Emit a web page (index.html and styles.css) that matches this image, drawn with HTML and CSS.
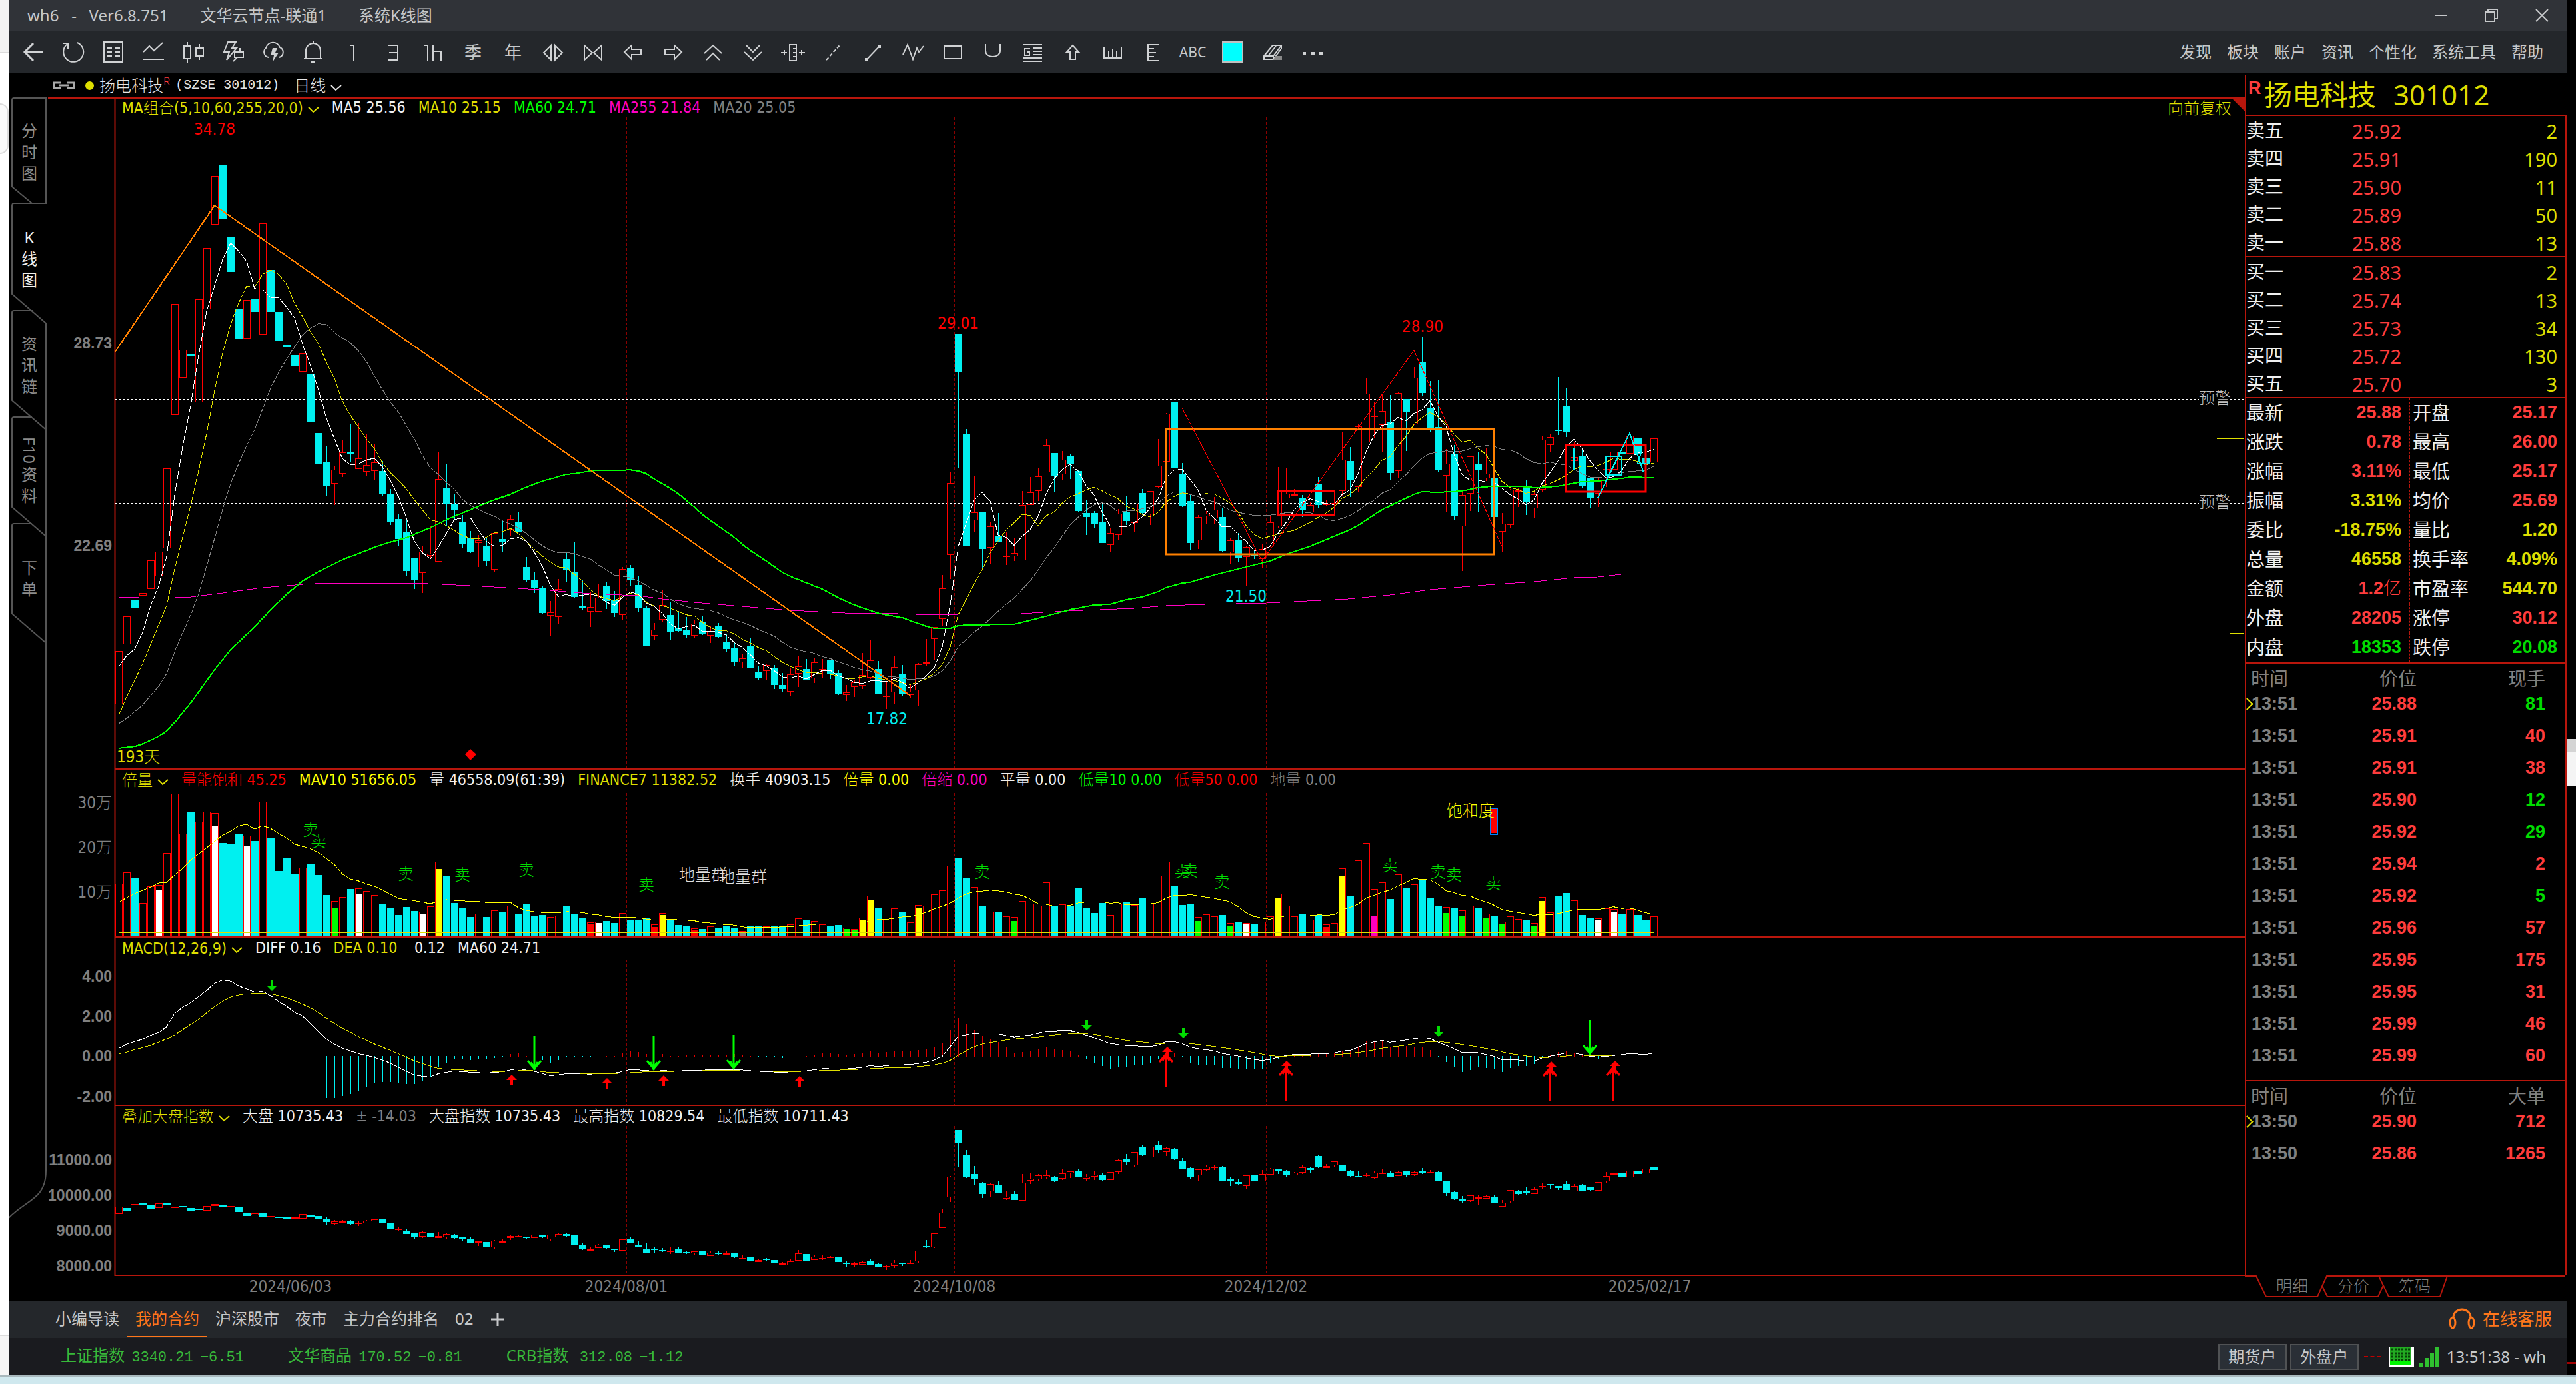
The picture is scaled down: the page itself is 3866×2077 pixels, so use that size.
FILE: index.html
```html
<!DOCTYPE html>
<html lang="zh-CN">
<head>
  <meta charset="UTF-8">
  <title>wh6 - 扬电科技 301012</title>
  <link rel="stylesheet" href="styles.css">
</head>
<body>
  <div class="edge edge-left"><i class="edge-line"></i><i class="edge-box"></i><i class="edge-foot"></i></div>
  <div class="window">
    <header class="titlebar">
      <span>wh6&nbsp;&nbsp; -&nbsp;&nbsp; Ver6.8.751</span>
      <span>文华云节点-联通1</span>
      <span>系统K线图</span>
      <div class="win-controls">
        <button aria-label="最小化"><svg viewBox="0 0 24 24"><path d="M3 12H21"/></svg></button>
        <button aria-label="还原"><svg viewBox="0 0 24 24"><path d="M3 7H17V21H3ZM7 7V3H21V17H17"/></svg></button>
        <button aria-label="关闭"><svg viewBox="0 0 24 24"><path d="M3 3L21 21M21 3L3 21"/></svg></button>
      </div>
    </header>

    <div class="toolbar">
      <div class="tools">
        <button aria-label="返回"><svg viewBox="0 0 36 36"><path class="thick" d="M5 18H32M18 5L5 18L18 31"/></svg></button>
        <button aria-label="刷新"><svg viewBox="0 0 36 36"><path d="M9 6A15 15 0 1 0 24 4M3 5H10V13"/></svg></button>
        <button aria-label="报价"><svg viewBox="0 0 36 36"><path d="M4 3H32V33H4ZM8 12H16M20 12H28M8 18H16M20 18H28M8 24H16M20 24H28"/></svg></button>
        <button aria-label="分时"><svg viewBox="0 0 36 36"><path d="M3 18L12 9L19 16L32 4M2 29H34"/></svg></button>
        <button aria-label="K线"><svg viewBox="0 0 36 36"><path d="M4 9H14V28H4ZM9 3V9M9 28V34M22 12H33V24H22ZM27 6V12M27 24V30"/></svg></button>
        <button aria-label="闪电"><svg viewBox="0 0 36 36"><path d="M10 3H22L16 12H23L8 30L12 18H4ZM20 18H33V26H20ZM28 12V18M24 26L18 32"/></svg></button>
        <button aria-label="云条件单"><svg viewBox="0 0 36 36"><path d="M11 26A8 8 0 0 1 7 12A11 11 0 0 1 28 11A8 8 0 0 1 27 26"/><path class="solid" d="M17 12H24L21 19H26L17 33L19 23H14Z"/></svg></button>
        <button aria-label="提醒"><svg viewBox="0 0 36 36"><path d="M7 28V16A11 11 0 0 1 29 16V28M4 28H32M15 33H21M18 2V5"/></svg></button>
        <button aria-label="1分钟"><svg viewBox="0 0 36 36"><path d="M14 8H19V31"/></svg></button>
        <button aria-label="3分钟"><svg viewBox="0 0 36 36"><path d="M10 8H25V30H10M12 19H25"/></svg></button>
        <button aria-label="1小时"><svg viewBox="0 0 36 36"><path d="M5 8H10V31M18 7V31M18 17H30V31"/></svg></button>
        <button>季</button>
        <button>年</button>
        <button aria-label="放宽"><svg viewBox="0 0 36 36"><path d="M15 8L4 19L15 30ZM21 8L32 19L21 30Z"/></svg></button>
        <button aria-label="收窄"><svg viewBox="0 0 36 36"><path d="M5 8L17 19L5 30ZM31 8L19 19L31 30Z"/></svg></button>
        <button aria-label="左移"><svg viewBox="0 0 36 36"><path d="M5 18L16 8V14H30V22H16V29Z"/></svg></button>
        <button aria-label="右移"><svg viewBox="0 0 36 36"><path d="M31 18L20 8V14H6V22H20V29Z"/></svg></button>
        <button aria-label="上移"><svg viewBox="0 0 36 36"><path d="M5 20L18 8L31 20M8 30L18 20L28 30"/></svg></button>
        <button aria-label="下移"><svg viewBox="0 0 36 36"><path d="M5 18L18 30L31 18M8 8L18 18L28 8"/></svg></button>
        <button aria-label="平移"><svg viewBox="0 0 36 36"><path d="M13 7H23V31H13ZM18 13H22M18 19H22M18 25H22M0 19H9M27 19H36M5 15V23M31 15V23"/></svg></button>
        <button aria-label="虚线"><svg viewBox="0 0 36 36"><path stroke-dasharray="5 3" d="M8 30L28 8"/></svg></button>
        <button aria-label="线段"><svg viewBox="0 0 36 36"><path d="M9 29L27 10"/><path class="solid" d="M6 27H11V32H6ZM25 7H30V12H25Z"/></svg></button>
        <button aria-label="波浪"><svg viewBox="0 0 36 36"><path d="M3 22L10 7L18 29L24 12L27 18L34 9"/></svg></button>
        <button aria-label="矩形"><svg viewBox="0 0 36 36"><path d="M5 9H31V28H5Z"/></svg></button>
        <button aria-label="圆弧"><svg viewBox="0 0 36 36"><path d="M7 6V16C7 22 12 25 18 25S29 22 29 16V6"/></svg></button>
        <button aria-label="黄金分割"><svg viewBox="0 0 36 36"><path d="M4 7H32M18 12H32M18 17H32M18 22H32M4 27H32M4 32H32M14 13H6V23H13V18H10"/></svg></button>
        <button aria-label="箭头"><svg viewBox="0 0 36 36"><path d="M18 8L27 18H22V29H14V18H9Z"/></svg></button>
        <button aria-label="周期尺"><svg viewBox="0 0 36 36"><path d="M5 10V27H31V10M12 17V27M18 14V27M24 17V27"/></svg></button>
        <button aria-label="测量"><svg viewBox="0 0 36 36"><path d="M27 7H11V31H27M11 13H20M11 19H23M11 25H20"/></svg></button>
        <button>ABC</button>
        <button aria-label="颜色"><i class="swatch"></i></button>
        <button aria-label="橡皮"><svg viewBox="0 0 36 36"><path d="M5 24L18 8H31L19 24ZM5 24V29H19V24M11 24L23 9M19 29L31 13V8"/><path fill="#888" stroke="none" d="M22 24H32V30H19Z"/></svg></button>
        <button aria-label="更多"><svg viewBox="0 0 36 36"><path class="solid" d="M3 18H8V22H3ZM16 18H21V22H16ZM28 18H33V22H28Z"/></svg></button>
      </div>
      <nav class="menu">
        <a href="#">发现</a><a href="#">板块</a><a href="#">账户</a><a href="#">资讯</a><a href="#">个性化</a><a href="#">系统工具</a><a href="#">帮助</a>
      </nav>
    </div>

    <main class="workspace">
      <nav class="side">
        <svg class="side-lines" viewBox="13 110 59 1842"><path d="M48 305L18 280V150Q18 147 21 147H69V305H21Q18 305 18 309V441L69 485V644M48 466H21Q18 466 18 469V601L69 645V805M48 626H21Q18 626 18 629V761L69 805V965M48 786H21Q18 786 18 789V921L69 965M48 466H50M69 485V1757C69 1800 40 1800 13 1828"/></svg>
        <div class="side-tabs">
          <button><span>分</span><span>时</span><span>图</span></button>
          <button class="active"><span>K</span><span>线</span><span>图</span></button>
          <button><span>资</span><span>讯</span><span>链</span></button>
          <button><span class="turned">F10</span><span>资</span><span>料</span></button>
          <button><span>下</span><span>单</span></button>
        </div>
      </nav>

      <section class="charts">
        <div class="symbol">
          <svg class="link" viewBox="0 0 34 14"><path d="M12 3H2V11H12M22 3H32V11H22M9 7H25"/></svg>
          <i class="dot"></i>
          <span class="song">扬电科技<sup>R</sup></span>
          <span class="mono">(SZSE 301012)</span>
          <button class="song">日线<svg class="chev" viewBox="0 0 17 10"><path d="M1 1L8 8L16 1"/></svg></button>
        </div>
        <div class="pane">
          <div class="legend">
            <button class="yellow">MA组合(5,10,60,255,20,0)<svg class="chev" viewBox="0 0 17 10"><path d="M1 1L8 8L16 1"/></svg></button>
            <span class="white">MA5 25.56</span><span class="yellow">MA10 25.15</span><span class="lime">MA60 24.71</span><span class="pink">MA255 21.84</span><span class="gray">MA20 25.05</span>
          </div>
          <svg class="plot" id="price" viewBox="72 146 3297 1009"></svg>
        </div>
        <div class="pane">
          <div class="legend">
            <button class="yellow">倍量<svg class="chev" viewBox="0 0 17 10"><path d="M1 1L8 8L16 1"/></svg></button>
            <span class="red">量能饱和 45.25</span><span class="bright">MAV10 51656.05</span><span class="white">量 46558.09(61:39)</span><span class="yellow">FINANCE7 11382.52</span><span class="white">换手 40903.15</span><span class="bright">倍量 0.00</span><span class="pink">倍缩 0.00</span><span class="white">平量 0.00</span><span class="lime">低量10 0.00</span><span class="red">低量50 0.00</span><span class="gray">地量 0.00</span>
          </div>
          <svg class="plot" id="volume" viewBox="72 1155 3297 252"></svg>
        </div>
        <div class="pane">
          <div class="legend">
            <button class="yellow">MACD(12,26,9)<svg class="chev" viewBox="0 0 17 10"><path d="M1 1L8 8L16 1"/></svg></button>
            <span class="white">DIFF 0.16</span><span class="yellow">DEA 0.10</span><span class="white">&nbsp;0.12</span><span class="white">MA60 24.71</span>
          </div>
          <svg class="plot" id="macd" viewBox="72 1407 3297 253"></svg>
        </div>
        <div class="pane">
          <div class="legend">
            <button class="yellow">叠加大盘指数<svg class="chev" viewBox="0 0 17 10"><path d="M1 1L8 8L16 1"/></svg></button>
            <span class="white">大盘 10735.43</span><span class="gray">± -14.03</span><span class="white">大盘指数 10735.43</span><span class="white">最高指数 10829.54</span><span class="white">最低指数 10711.43</span>
          </div>
          <svg class="plot" id="index" viewBox="72 1660 3297 292"></svg>
        </div>
      </section>

      <aside class="quote">
        <div class="quote-body">
          <h1><sup>R</sup><span>扬电科技</span><span>301012</span></h1>
          <table class="book">
            <tbody>
              <tr><th>卖五</th><td>25.92</td><td>2</td></tr>
              <tr><th>卖四</th><td>25.91</td><td>190</td></tr>
              <tr><th>卖三</th><td>25.90</td><td>11</td></tr>
              <tr><th>卖二</th><td>25.89</td><td>50</td></tr>
              <tr><th>卖一</th><td>25.88</td><td>13</td></tr>
            </tbody>
          </table>
          <table class="book">
            <tbody>
              <tr><th>买一</th><td>25.83</td><td>2</td></tr>
              <tr><th>买二</th><td>25.74</td><td>13</td></tr>
              <tr><th>买三</th><td>25.73</td><td>34</td></tr>
              <tr><th>买四</th><td>25.72</td><td>130</td></tr>
              <tr><th>买五</th><td>25.70</td><td>3</td></tr>
            </tbody>
          </table>
          <table class="stats">
            <tbody>
              <tr><th>最新</th><td class="up">25.88</td><th>开盘</th><td class="up">25.17</td></tr>
              <tr><th>涨跌</th><td class="up">0.78</td><th>最高</th><td class="up">26.00</td></tr>
              <tr><th>涨幅</th><td class="up">3.11%</td><th>最低</th><td class="up">25.17</td></tr>
              <tr><th>振幅</th><td class="yellow">3.31%</td><th>均价</th><td class="up">25.69</td></tr>
              <tr><th>委比</th><td class="yellow">-18.75%</td><th>量比</th><td class="yellow">1.20</td></tr>
              <tr><th>总量</th><td class="yellow">46558</td><th>换手率</th><td class="yellow">4.09%</td></tr>
              <tr><th>金额</th><td class="up">1.2<span class="unit">亿</span></td><th>市盈率</th><td class="yellow">544.70</td></tr>
              <tr><th>外盘</th><td class="up">28205</td><th>涨停</th><td class="up">30.12</td></tr>
              <tr><th>内盘</th><td class="down">18353</td><th>跌停</th><td class="down">20.08</td></tr>
            </tbody>
          </table>
          <table class="ticks">
            <thead><tr><th>时间</th><th>价位</th><th>现手</th></tr></thead>
            <tbody>
              <tr class="current"><td>13:51</td><td>25.88</td><td class="down">81</td></tr>
              <tr><td>13:51</td><td>25.91</td><td>40</td></tr>
              <tr><td>13:51</td><td>25.91</td><td>38</td></tr>
              <tr><td>13:51</td><td>25.90</td><td class="down">12</td></tr>
              <tr><td>13:51</td><td>25.92</td><td class="down">29</td></tr>
              <tr><td>13:51</td><td>25.94</td><td>2</td></tr>
              <tr><td>13:51</td><td>25.92</td><td class="down">5</td></tr>
              <tr><td>13:51</td><td>25.96</td><td>57</td></tr>
              <tr><td>13:51</td><td>25.95</td><td>175</td></tr>
              <tr><td>13:51</td><td>25.95</td><td>31</td></tr>
              <tr><td>13:51</td><td>25.99</td><td>46</td></tr>
              <tr><td>13:51</td><td>25.99</td><td>60</td></tr>
            </tbody>
          </table>
          <div class="big-orders">
            <table class="ticks">
              <thead><tr><th>时间</th><th>价位</th><th>大单</th></tr></thead>
              <tbody>
                <tr class="current"><td>13:50</td><td>25.90</td><td>712</td></tr>
                <tr><td>13:50</td><td>25.86</td><td>1265</td></tr>
              </tbody>
            </table>
          </div>
        </div>
        <div class="quote-tabs">
          <svg viewBox="0 0 484 34"><path d="M0 1H17L32 32H109L123 1H481M116 16L124 32H200L208 15M201 1L216 32H293L304 1"/></svg>
          <div class="quote-tab-row"><button>明细</button><button>分价</button><button>筹码</button></div>
        </div>
      </aside>
    </main>

    <nav class="pages">
      <a href="#">小编导读</a><a href="#" class="active">我的合约</a><a href="#">沪深股市</a><a href="#">夜市</a><a href="#">主力合约排名</a><a href="#">02</a>
      <button aria-label="新建页面"><svg viewBox="0 0 22 22"><path d="M11 1V21M1 11H21"/></svg></button>
      <a href="#" class="service"><svg viewBox="0 0 40 32"><path d="M7 14C8 -2 32 -2 33 14"/><ellipse cx="6" cy="22" rx="4" ry="8"/><ellipse cx="34" cy="22" rx="4" ry="8"/></svg>在线客服</a>
    </nav>

    <footer class="status">
      <div class="indices">
        <span>上证指数 <b>3340.21</b> <b>−6.51</b></span>
        <span>文华商品 <b>170.52</b> <b>−0.81</b></span>
        <span>CRB指数&nbsp; <b>312.08</b> <b>−1.12</b></span>
      </div>
      <button>期货户</button>
      <button>外盘户</button>
      <i class="dashes"></i>
      <svg class="battery" viewBox="0 0 37 31"><path fill="#fff" d="M0 0H37V31H0Z"/><path fill="#22aa22" d="M1 1H33V22H1Z"/><path stroke="#064006" stroke-width="3" stroke-dasharray="3 2" d="M3 4H33M3 10H33M3 15H33M3 20H33"/><path fill="#00f500" d="M1 22H33V28H1Z"/></svg>
      <svg class="signal" viewBox="0 0 30 31"><path d="M0 25H6V31H0ZM8 17H14V31H8ZM16 9H22V31H16ZM24 1H30V31H24Z"/></svg>
      <span class="clock">13:51:38 - wh</span>
    </footer>
  </div>
  <div class="edge edge-right"><i class="peek"></i><i class="peek-foot"></i></div>
  <div class="desktop"></div>
  <script src="chart.js"></script>
</body>
</html>
```
FILE: styles.css
```css
* {
  margin: 0;
  padding: 0;
  box-sizing: border-box;
}
body {
  display: grid;
  grid-template-columns: 13px 1fr 13px;
  grid-template-rows: auto 1fr;
  min-height: 100vh;
  background: #000;
  color: #c6c8ca;
  font-family: "Noto Sans", "Noto Sans CJK SC", sans-serif;
  font-size: 24px;
  line-height: 32px;
}
button {
  background: none;
  border: none;
  color: inherit;
  font: inherit;
  cursor: pointer;
}
a {
  color: inherit;
  text-decoration: none;
}
svg {
  display: block;
}
.yellow { color: #dede00; }
.bright { color: #ffff00; }
.white { color: #f0f0f0; }
.lime { color: #00ff00; }
.pink { color: #ff00c0; }
.gray { color: #808080; }
.red { color: #ff0000; }

/* what shows on both sides of the window */
.edge {
  display: flex;
  flex-direction: column;
}
.edge-left {
  background: #fff;
}
.edge-line {
  height: 80px;
  background: #f3f3f3;
  border-bottom: 2px solid #dcdcdc;
}
.edge-box {
  height: 76px;
  margin-top: 75px;
  border: 2px solid #dcdcdc;
  border-left: none;
  border-radius: 0 14px 14px 0;
  background: #fafafa;
}
.edge-foot {
  height: 61px;
  margin-top: auto;
  background: #f5f5f5;
  border-top: 2px solid #dcdcdc;
}
.edge-right {
  justify-content: space-between;
}
.peek {
  height: 70px;
  margin-top: 1109px;
  background: #f4f4f4;
  border-top: 20px solid #d4d4d4;
}
.peek-foot {
  height: 20px;
  border-top: 3px solid #a00000;
}
.desktop {
  grid-column: 1 / -1;
  background: #cfe8ee;
  border-top: 2px solid #a9b9bd;
}

.window {
  display: flex;
  flex-direction: column;
}
.titlebar {
  display: flex;
  align-items: center;
  gap: 48px;
  height: 46px;
  padding-left: 28px;
  background: #303338;
}
.win-controls {
  display: flex;
  margin-left: auto;
}
.win-controls button {
  display: flex;
  justify-content: center;
  width: 76px;
}
.win-controls svg {
  width: 24px;
  fill: none;
  stroke: #c6c8ca;
  stroke-width: 2;
}
.toolbar {
  display: flex;
  justify-content: space-between;
  align-items: center;
  height: 64px;
  padding: 0 36px 0 7px;
  background: #24272b;
}
.tools {
  display: flex;
}
.tools button {
  display: flex;
  justify-content: center;
  align-items: center;
  width: 60px;
  height: 40px;
  font-size: 26px;
}
.tools button:nth-child(30) {
  font-size: 21px;
}
.tools svg {
  width: 36px;
  fill: none;
  stroke: #d0d2d4;
  stroke-width: 2;
}
.tools .thick {
  stroke-width: 3;
}
.tools .solid {
  fill: #d0d2d4;
  stroke: none;
}
.swatch {
  width: 32px;
  height: 32px;
  background: #00ffff;
  border: 2px solid #c0c0c0;
}
.menu {
  display: flex;
  gap: 23px;
}

.workspace {
  display: grid;
  grid-template-columns: 59px 1fr 484px;
}
.side {
  display: grid;
}
.side > * {
  grid-area: 1 / 1;
}
.side-lines {
  width: 59px;
  fill: none;
  stroke: #555;
  stroke-width: 2;
}
.side-tabs {
  display: flex;
  flex-direction: column;
  padding: 38px 0 0 3px;
}
.side-tabs button {
  display: flex;
  flex-direction: column;
  justify-content: center;
  align-items: center;
  height: 160px;
  color: #8c8c8c;
}
.side-tabs .active {
  color: #f0f0f0;
}
.turned {
  writing-mode: vertical-rl;
}

.charts {
  min-width: 0;
}
.symbol {
  display: flex;
  align-items: center;
  height: 36px;
  padding-left: 7px;
  color: #e6e6e6;
}
.symbol sup {
  font-size: 17px;
  line-height: 10px;
  color: #ff3c3c;
}
.song {
  font-weight: 300;
}
.link {
  width: 34px;
  fill: none;
  stroke: #aaa;
  stroke-width: 3;
}
.dot {
  width: 13px;
  height: 13px;
  margin: 0 8px 0 15px;
  border-radius: 50%;
  background: #dede00;
}
.mono {
  margin: 0 22px 0 8px;
  font-family: "Liberation Mono", monospace;
  font-size: 20px;
}
.chev {
  display: inline-block;
  width: 17px;
  margin-left: 7px;
  fill: none;
  stroke: currentColor;
  stroke-width: 2;
}
.pane {
  display: grid;
}
.pane > * {
  grid-area: 1 / 1;
}
.legend {
  z-index: 1;
  display: flex;
  gap: 19px;
  height: 32px;
  padding-left: 111px;
  font-family: "DejaVu Sans Condensed", "Noto Sans CJK SC", sans-serif;
  font-size: 23px;
  font-weight: 300;
  line-height: 30px;
  white-space: nowrap;
}
.plot {
  width: 100%;
  font-family: "DejaVu Sans Condensed", "Noto Sans CJK SC", sans-serif;
  font-size: 24px;
  font-weight: 300;
}
.plot text {
  dominant-baseline: central;
}
.plot .axis {
  fill: #808080;
  text-anchor: end;
}
.plot .bold {
  font-family: "Liberation Sans", sans-serif;
  font-size: 23px;
  font-weight: bold;
}
.plot .mid {
  text-anchor: middle;
}
.crisp {
  shape-rendering: crispEdges;
}
.line {
  fill: none;
  shape-rendering: crispEdges;
}

.quote {
  display: flex;
  flex-direction: column;
}
.quote-body {
  flex: 1;
  display: flex;
  flex-direction: column;
  margin-top: 2px;
  border-left: 2px solid #b8160c;
}
.quote h1 {
  display: flex;
  height: 60px;
  padding-left: 3px;
  color: #dede00;
  font-size: 42px;
  font-weight: normal;
  line-height: 60px;
}
.quote h1 span {
  margin-right: 26px;
}
.quote sup {
  width: 24px;
  color: #ff3c3c;
  font: bold 27px/40px "Liberation Sans", sans-serif;
}
.quote table {
  width: calc(100% - 1px);
  table-layout: fixed;
  border-collapse: separate;
  border-spacing: 0;
  border-top: 2px solid #b8160c;
  border-right: 2px solid #b8160c;
}
.quote th {
  width: 90px;
  color: #f0f0f0;
  font-size: 28px;
  font-weight: normal;
  text-align: left;
  white-space: nowrap;
}
.quote td {
  text-align: right;
}
.book tr {
  height: 42px;
}
.book td {
  color: #dede00;
  padding: 3px 12px 0 0;
  font-size: 29px;
}
.book td:nth-child(2) {
  width: 155px;
  color: #ff3c3c;
}
.stats tr {
  height: 44px;
}
.stats th {
  padding-bottom: 2px;
}
.stats td,
.ticks td {
  padding: 0 12px 2px 0;
  font-family: "Liberation Sans", "Noto Sans CJK SC", sans-serif;
  font-size: 27px;
  font-weight: bold;
}
.stats td:nth-child(2) {
  width: 156px;
  border-right: 1px dashed #b8160c;
}
.stats th:nth-child(3) {
  padding-left: 4px;
}
.unit {
  font-weight: 300;
}
.up { color: #ff3c3c; }
.quote .down { color: #00dc00; }
.quote .ticks th {
  width: 128px;
  height: 36px;
  padding: 8px 0 0 7px;
  color: #808080;
  line-height: 28px;
}
.quote .ticks th:nth-child(n+2) {
  text-align: right;
}
.quote .ticks th:nth-child(3) {
  width: auto;
  padding-right: 30px;
}
.ticks tbody tr {
  height: 48px;
}
.quote .ticks td {
  padding: 0;
  color: #ff3c3c;
}
.quote .ticks td:first-child {
  position: relative;
  padding-left: 8px;
  color: #808080;
  text-align: left;
}
.quote .ticks td:last-child {
  padding-right: 30px;
}
.quote .ticks td.down {
  color: #00dc00;
}
.current td:first-child::before {
  content: "";
  position: absolute;
  left: -5px;
  top: 18px;
  width: 11px;
  height: 11px;
  border: solid #dede00;
  border-width: 2px 2px 0 0;
  transform: rotate(45deg);
}
.quote-body > .ticks {
  padding-bottom: 13px;
}
.big-orders {
  flex: 1;
  width: calc(100% - 1px);
  border-right: 2px solid #b8160c;
}
.big-orders .ticks {
  width: 100%;
  border-right: none;
}
.quote-tabs {
  display: grid;
  height: 38px;
  color: #808080;
  font-weight: 300;
}
.quote-tabs > * {
  grid-area: 1 / 1;
}
.quote-tabs svg {
  width: 484px;
  fill: none;
  stroke: #b8160c;
  stroke-width: 2;
}
.quote-tab-row {
  display: flex;
  padding-left: 25px;
}
.quote-tab-row button {
  width: 92px;
  height: 32px;
}

.pages {
  display: flex;
  align-items: center;
  height: 56px;
  padding: 0 23px 0 58px;
  background: #24272b;
}
.pages a {
  padding: 0 12px;
  line-height: 52px;
  border-bottom: 2px solid transparent;
}
.pages .active {
  color: #ff761a;
  border-bottom-color: #ff761a;
}
.pages button {
  padding: 0 14px;
}
.pages button svg {
  width: 22px;
  stroke: #c6c8ca;
  stroke-width: 3;
}
.pages .service {
  display: flex;
  align-items: center;
  gap: 11px;
  margin-left: auto;
  padding: 0;
  color: #ff761a;
  font-size: 26px;
}
.service svg {
  width: 40px;
  fill: none;
  stroke: #ff761a;
  stroke-width: 3;
}
.status {
  display: flex;
  align-items: center;
  gap: 5px;
  height: 56px;
  padding: 0 32px 0 78px;
  background: #1a1b1f;
}
.indices {
  display: flex;
  gap: 66px;
  margin-right: auto;
  color: #38b83a;
}
.indices b {
  margin-left: 4px;
  font-family: "Liberation Mono", monospace;
  font-size: 22px;
  font-weight: normal;
}
.status button {
  width: 103px;
  height: 39px;
  border: 2px solid #505254;
  background: #2a2f36;
  line-height: 32px;
}
.dashes {
  width: 25px;
  margin: 0 8px 0 3px;
  border-top: 2px dashed #c00000;
}
.battery {
  width: 37px;
}
.signal {
  width: 30px;
  margin: 0 6px 0 3px;
  fill: #2fc02f;
}
```
FILE: chart.js
```js
const STEP = 12;
const FIRST = 178;
const DAYS = 193;
const RED = "#ff0000";
const CYAN = "#00f0f0";
const FRAME = "#b8160c";

const cx = (i) => FIRST + STEP * i;
const rect = (x, y, w, h, fill) => `<rect x="${x}" y="${y}" width="${w}" height="${h}" fill="${fill}"/>`;
const box = (x, y, w, h, color, width) => `<rect x="${x}" y="${y}" width="${w}" height="${h}" fill="none" stroke="${color}" stroke-width="${width}"/>`;
const poly = (pts, color, width) => `<polyline class="line" points="${pts.map((p) => p.join(",")).join(" ")}" stroke="${color}" stroke-width="${width}"/>`;
const text = (x, y, str, color, cls) => `<text x="${x}" y="${y}" fill="${color}" class="${cls || ""}">${str}</text>`;
const pairs = (str) => str.trim().split(/\s+/).map((p) => p.split(",").map(Number));

// one bar: colour letter, then high, body top, body bottom, low
function parseBars(str, base, scale) {
  return str.trim().split(/\s+/).map((s) => ({
    up: s[0] === "r",
    y: s.slice(1).split(",").map((v) => Math.round(base + v / scale)),
  }));
}

function candles(bars) {
  return '<g class="crisp">' + bars.map((b, i) => {
    const [h, t, d, l] = b.y;
    const x = cx(i);
    if (!b.up) {
      return rect(x, h, 1, l - h, CYAN) + rect(x - 5, t, 11, Math.max(2, d - t), CYAN);
    }
    return rect(x, h, 1, t - h, RED) + rect(x, d, 1, Math.max(0, l - d), RED) +
      box(x - 4.5, t + 0.5, 10, Math.max(1, d - t - 1), RED, 1);
  }).join("") + "</g>";
}

// moving average of a series, the first days come from earlier history
function average(values, n, seed) {
  return values.map((v, i) => {
    if (i < seed.length) return [cx(i), seed[i]];
    const part = values.slice(i - n + 1, i + 1);
    return [cx(i), Math.round(part.reduce((a, b) => a + b, 0) / n * 10) / 10];
  });
}

function frame(top, bottom, gridTop) {
  let s = "";
  [436, 940, 1432, 1900].forEach((x) => {
    s += `<path d="M${x + 0.5} ${gridTop}V${bottom}" stroke="#8a0000" stroke-dasharray="4 3"/>`;
  });
  s += `<path d="M172.5 ${top}V${bottom}" stroke="${FRAME}" stroke-width="2"/>`;
  s += `<path d="M172 ${bottom - 1}H3369" stroke="${FRAME}" stroke-width="2"/>`;
  s += `<path d="M2476.5 ${bottom - 20}V${bottom}" stroke="#808080"/>`;
  return s;
}

// ---- price ----
const price = [
  ...parseBars(`r1284,1297,1416,1416 r1168,1220,1283,1294 c1118,1183,1202,1214 r1151,1168,1174,1220 r1069,1096,1159,1192
    r1004,1077,1131,1135 r756,892,1069,1083 r518,527,773,876 r525,628,690,690 c429,639,641,740
    r516,516,745,768 r244,403,539,549 r164,243,350,400 c192,219,338,391 c346,377,456,501
    c379,537,605,677 r416,517,603,603 c428,516,544,589 r243,347,594,594 c404,451,545,550
    c497,544,609,635 c542,618,623,710 c608,641,665,698 r625,636,677,734 c682,682,789,796
    c772,814,882,901 c842,879,930,954 r886,895,926,973 r830,857,903,911 c793,856,860,879
    r791,870,894,894 r817,885,899,908 r839,879,898,919 c875,898,950,954 c938,948,1011,1018
    c993,1004,1049,1064 c1007,1033,1120,1130 c1090,1092,1139,1160 r1064,1076,1124,1169 r1020,1081,1085,1092
    r855,916,1099,1099 c882,936,970,1020 c948,972,984,1007 c995,1010,1061,1068 c1031,1046,1077,1080
    r1040,1051,1057,1111 c1047,1064,1098,1108 r1033,1035,1116,1123 c1008,1049,1055,1077`, 100, 1.479),
  ...parseBars(`r484,502,546,574 c470,512,557,557 c661,703,756,767 c722,759,793,811 c781,790,896,902
    r845,894,906,994 r753,796,914,944 c644,669,717,767 c599,722,829,832 c760,865,874,882
    r809,872,891,955 r776,831,891,891 c764,781,846,879 c804,843,896,913 r704,710,905,925
    c694,708,759,783 c742,778,874,890 c868,876,1033,1033 r938,967,992,1011 r800,863,925,935
    c850,904,977,1008 c890,960,972,976 c913,969,988,1002 r924,942,992,1000 c907,935,983,988
    r950,975,992,1022 c938,952,997,1003 c982,1019,1047,1057 c1018,1044,1100,1119 r1068,1087,1104,1127
    c1002,1036,1126,1126 c1118,1142,1168,1179 r1108,1114,1140,1180 c1114,1128,1198,1215 c1148,1198,1215,1229
    r1128,1153,1227,1246 r1075,1121,1150,1207 c1089,1131,1179,1179 r1086,1104,1169,1190 r1089,1132,1136,1168
    c1095,1095,1151,1173 c1134,1148,1238,1241 r1199,1230,1239,1266 r1179,1186,1206,1249 r1064,1155,1202,1215
    r1008,1096,1167,1174 c1098,1131,1238,1238 r1187,1244,1248,1299 r1077,1124,1230,1276 c1114,1154,1235,1246
    r1192,1225,1239,1253 r1106,1112,1222,1285 r1004,1104,1108,1116 r954,956,1006,1095 r736,793,922,952
    r305,351,651,753`, 600, 2.8),
  ...parseBars(`c154,154,301,665 c516,536,959,959 r693,831,863,906 c832,832,971,1046 r867,884,965,1027
    c835,923,946,946 r908,996,1000,1032 r928,987,998,1017 r751,805,1013,1013 r698,755,805,805
    r665,696,752,789 r554,576,680,680 c607,607,695,753 r599,631,689,708 c609,617,647,706
    c670,675,827,830 c784,835,850,918 c828,835,878,893 c798,870,948,948 r891,911,957,983
    r820,836,917,937 c770,832,865,880 r798,798,872,905 c743,759,835,838 r750,752,840,880
    r554,654,735,739 r455,459,641,652 c415,415,665,665 c645,688,809,811 c763,789,948,976
    r842,849,937,970 r828,836,848,876 r774,823,856,875 c818,850,979,984 r931,937,983,1028
    c911,937,1004,1022 r958,963,1002,1109 c977,992,999,1009 r952,972,1009,1044 r848,871,961,964
    r660,753,886,892 r663,760,780,780 r744,763,768,770 c766,776,822,850 r795,805,831,833
    c699,726,804,815 r785,798,802,806 r775,785,800,806 r525,633,752,768 c584,637,711,775
    r495,507,737,754 r321,383,566,566 r413,465,469,550 r387,447,502,603 c388,490,683,708
    r377,380,676,702 c402,402,453,600 r281,322,499,502 c167,260,379,392 c334,435,511,525
    c332,508,673,680 r591,648,692,829 c577,612,845,859 r754,767,884,1055 r616,619,762,826
    c603,650,670,832 r588,686,704,714 c703,703,850,850 r834,874,906,983 r744,745,881,894
    r741,748,751,812 c711,738,795,842 r755,765,818,855 r540,557,747,753 r535,545,576,602
    c319,518,524,539 c359,427,526,546 r563,623,638,672 c592,620,731,741 c697,703,776,816
    r701,708,760,813 r655,667,703,735 r597,603,669,672 c567,602,612,670 r532,542,610,622
    c531,549,612,640 c620,625,651,683 r536,552,643,645`, 440, 2.529),
];
const close = price.map((b) => (b.up ? b.y[1] : b.y[2]));
const ma5 = average(close, 5, [1001, 984, 974, 949]);
const ma10 = average(close, 10, [1074, 1046, 1021, 996, 967, 938, 909, 854, 806]);
const ma20 = average(close, 20, [1086, 1078, 1068, 1058, 1044, 1030, 1011, 978, 950, 923, 891, 850, 808, 764, 726, 696, 669, 645, 614]);
const ma60 = pairs(`178,1123 203,1120 215,1116 226,1111 238,1105 250,1097 263,1083 286,1055 322,1005 346,975 382,941 406,915
  430,892 454,872 478,858 514,840 574,817 610,807 622,802 646,792 670,780 706,765 742,750 766,742 790,731 815,722
  850,712 862,711 886,707 898,706 934,706 944,705 958,707 970,711 982,719 1006,733 1018,741 1036,756 1054,772 1066,781
  1100,805 1114,817 1126,826 1150,842 1174,859 1186,865 1236,885 1258,897 1282,908 1320,921 1354,927 1390,940 1402,943
  1426,943 1438,939 1453,938 1522,937 1558,928 1606,915 1642,908 1666,907 1690,900 1714,896 1738,888 1750,882 1775,875
  1786,874 1822,863 1870,851 1906,842 1930,832 1966,820 2026,795 2039,788 2074,765 2122,742 2134,738 2158,739 2194,737
  2218,732 2238,730 2278,730 2306,732 2337,730 2374,723 2398,722 2434,718 2448,716 2482,717`);
const ma255 = pairs(`178,896 238,898 286,896 334,890 394,882 454,877 490,875 622,875 706,879 760,882 826,886 886,891 958,894
  994,899 1042,904 1114,910 1186,916 1268,920 1320,920 1402,923 1438,922 1463,921 1532,921 1600,917 1702,913 1750,909
  1809,907 1901,905 2023,899 2086,893 2146,885 2230,878 2302,873 2362,867 2398,866 2433,862 2482,861`);

let s = frame(146, 1155, 176);
s += `<path d="M72 147H3369" stroke="${FRAME}" stroke-width="2"/>`;
[599, 755].forEach((y) => {
  s += `<path d="M172 ${y + 0.5}H3300M3347 ${y + 0.5}H3369" stroke="#fff" stroke-dasharray="3 3"/>`;
  s += text(3324, y - 1, "预警", "#c0c0c0", "mid");
});
s += candles(price);
s += poly(ma20, "#808080", 1) + poly(ma10, "#dede00", 1) + poly(ma5, "#ffffff", 1);
s += poly(ma255, "#ff00c0", 1) + poly(ma60, "#00ff00", 2);
s += poly([[172, 529], [322, 308], [1366, 1044]], "#ff8000", 2);
s += box(1750, 644, 492, 188, "#ff8000", 3);
s += poly([[1774, 612], [1894, 842], [2122, 526], [2254, 820]], RED, 1);
s += box(1918, 737, 85, 36, RED, 2) + box(2350, 668, 120, 70, RED, 3);
s += box(2410, 685, 24, 28, CYAN, 2) + poly([[2362, 673], [2362, 705]], CYAN, 2);
s += poly([[2398, 747], [2446, 650], [2467, 709]], CYAN, 2);
s += poly([[2455, 675], [2464, 675], [2458, 696], [2470, 696]], CYAN, 2);
s += text(322, 194, "34.78", RED, "mid") + text(1438, 485, "29.01", RED, "mid") + text(2135, 490, "28.90", RED, "mid");
s += text(1870, 895, "21.50", CYAN, "mid") + text(1331, 1079, "17.82", CYAN, "mid");
s += text(175, 1136, "193天", "#dede00");
s += text(3253, 163, "向前复权", "#dede00");
s += `<path d="M706 1124L715 1132L706 1141L698 1132Z" fill="${RED}"/>`;
s += `<path d="M3349 147H3369V167Z" fill="${FRAME}"/>`;
s += '<path d="M3347 445.5H3367M3327 658.5H3367M3347 950.5H3367" stroke="#dede00"/>';
s += text(168, 515, "28.73", "#808080", "axis bold") + text(168, 819, "22.69", "#808080", "axis bold");
document.getElementById("price").innerHTML = s;

// ---- volume ----
// colour letter and top of the bar, then an optional inner bar
const FILL = { w: "#fff", g: "#00ff00", y: "#ffff00", d: RED, m: "#ff00c0", a: "#888" };
const volume = `r578 r530 c553 r659 r588 r583w605 r449 r200 r368 c277 r317 r275 r281w332 c406 c409 c370 r376w417 c398 r233 c386
  c524 c467 c538 r510 c493 c540 c624 r650g680 r634 c599 r597w619 r608 r625 c664 c680 c708 c675 c692 r695w702 r673
  r485y515 c543 c658 c678 c717 r704 c717 r690 c697 r670 c706 c661 c711 c708 r717 r711 c669 c706 c720 r738d748
  r735w742 c734 c742 r701 c728 c728 c722 r748d759 r701y708 c731 c750 c756 r763d769 c767 r757 c764 c753 c764 r776a782 c753
  c756 r757 c753 c753 r748 r723 c731 r734 r748 c756 c750 r762g767 r768g773 r720y728 r628y644 c680 r729 r679 c694 r740
  r667y678 r670 r622 r606 r502 c470 c552 r591 c669 r695 c697 r715 r717g733 r650 r661 r670 r572 c669 r664 c669
  c596 c678 c700 c658 r709 r661 c652 r667 c638 r661 r544 r485 c588 c666 c664 r717g733 r706 r715 c708 r743g755
  c739 r741w745 c748 r735 r715 r620y638 r670 r715 c703 r729 c708 r748d759 r743 r513y543 c630 r480 r407 r600m711 r572 c641
  r538 c594 r580 c560 c636 c669 r676g700 c678 r690g711 r670 c678 r704g722 c714 r735g748 r715 r726 c731 r743g753 r633y650 r698
  c630 c616 r648 c708 c722 r723w728 r681 r684w694 c703 r684 c708 c731 r715`.trim().split(/\s+/);
const vy = (v) => Math.round(1120 + v / 2.8);
const tops = [];

s = frame(1155, 1407, 1190) + '<g class="crisp">';
volume.forEach((bar, i) => {
  const m = bar.match(/([rc])(\d+)(?:([a-z])(\d+))?/);
  const y = vy(m[2]);
  const x = cx(i) - 5;
  tops.push(y);
  s += m[1] === "c" ? rect(x, y, 11, 1406 - y, CYAN) : box(x + 0.5, y + 0.5, 10, 1406 - y, RED, 1);
  if (m[3]) s += rect(x + 1, vy(m[4]), 9, 1406 - vy(m[4]), FILL[m[3]]);
});
s += "</g>";
s += poly(average(tops, 10, [1354, 1347, 1341, 1336, 1331, 1325, 1324, 1313, 1303]), "#ffff00", 1);
s += poly([[178, 1399], [2482, 1399]], "#dede00", 1);
s += `<path d="M172 1406H3369" stroke="${FRAME}" stroke-width="2"/>`;
pairs(`466,1247 478,1264 609,1313 694,1314 790,1307 970,1329 1474,1310 1774,1309 1786,1308 1834,1325 2086,1300 2158,1310
  2182,1314 2241,1327`).forEach(([x, y]) => { s += text(x, y - 1, "卖", "#00dc00", "mid"); });
s += text(1019, 1313, "地量群", "#e0e0e0") + text(1079, 1316, "地量群", "#e0e0e0");
s += rect(2237, 1214, 11, 36, RED) + box(2236.5, 1213.5, 11, 39, "#0080ff", 1);
s += text(2171, 1217, "饱和度", "#ffff00");
[["30万", 1205], ["20万", 1272], ["10万", 1339]].forEach(([t, y]) => { s += text(168, y, t, "#808080", "axis"); });
document.getElementById("volume").innerHTML = s;

// ---- macd ----
const my = (v) => 1120 + v / 2.8;
const diff = pairs(`0,1270 1,1252 3,1231 4,1214 5,1202 6,1178 7,1122 8,1096 9,1076 10,1051 11,1025 12,995 13,981 14,986 15,1006
  16,1019 17,1032 18,1029 19,1047 20,1071 21,1092 22,1117 23,1133 24,1164 25,1198 26,1230 27,1252 28,1268 29,1281 30,1292
  31,1299 32,1308 33,1319 34,1332 35,1350 36,1366 37,1381 38,1387 39,1390 40,1376 42,1365 44,1370 46,1373 48,1368 49,1360
  50,1356 51,1361 52,1366 53,1376 54,1385 55,1381 56,1376 59,1378 62,1374 64,1359 66,1362 67,1367 68,1362 69,1365 73,1361
  77,1358 80,1366 83,1371 86,1364 88,1355 91,1356 93,1350 94,1342 95,1346 97,1339 99,1338 101,1328 102,1318 103,1303
  104,1262 105,1218 106,1212 107,1205 108,1208 110,1209 112,1221 114,1213 116,1197 119,1194 120,1202 122,1224 124,1249
  126,1258 129,1262 130,1256 131,1241 132,1241 133,1249 134,1264 135,1271 137,1280 138,1291 140,1302 142,1316 143,1321
  144,1316 146,1300 147,1295 150,1293 152,1290 153,1281 154,1278 155,1265 156,1250 158,1236 159,1244 161,1234 163,1224
  164,1228 165,1243 167,1271 168,1286 170,1288 172,1303 173,1317 175,1318 176,1323 177,1323 178,1310 180,1296 181,1289
  182,1289 184,1303 185,1306 187,1300 189,1292 191,1295 192,1289`);
const dea = pairs(`0,1293 1,1286 2,1275 3,1266 4,1257 5,1243 6,1230 7,1212 8,1190 9,1168 10,1147 11,1119 12,1093 13,1070 14,1053
  15,1044 16,1040 17,1038 18,1038 19,1040 20,1047 21,1056 22,1069 23,1083 24,1099 25,1118 26,1142 27,1164 28,1184 30,1219
  32,1251 34,1278 36,1307 37,1322 38,1334 39,1345 40,1354 42,1359 44,1362 46,1366 48,1367 51,1362 52,1364 54,1371 58,1375
  61,1377 63,1374 66,1368 70,1366 75,1362 80,1365 84,1368 88,1363 92,1359 95,1353 99,1350 101,1343 102,1339 103,1332
  104,1320 105,1299 106,1280 107,1263 108,1252 109,1245 111,1234 112,1230 115,1221 117,1213 119,1206 121,1206 122,1210
  124,1222 126,1236 128,1243 130,1250 133,1246 135,1253 138,1266 141,1281 144,1300 145,1303 148,1300 152,1297 154,1291
  156,1282 158,1269 161,1256 163,1244 165,1240 167,1248 169,1258 172,1276 174,1292 177,1306 178,1309 180,1306 182,1298
  185,1301 188,1298 192,1297`);
function at(points, i) {
  const k = points.findIndex((p) => p[0] >= i);
  if (points[k][0] === i) return points[k][1];
  const [a, b] = [points[k - 1], points[k]];
  return a[1] + (b[1] - a[1]) * (i - a[0]) / (b[0] - a[0]);
}

s = frame(1407, 1660, 1440) + '<g class="crisp">';
for (let i = 0; i < DAYS; i++) {
  const h = Math.round((at(dea, i) - at(diff, i)) * 2 / 2.8);
  s += h > 0 ? rect(cx(i), 1586 - h, 1, h, "#e00000") : rect(cx(i), 1585, 1, -h, CYAN);
}
s += "</g>";
s += poly(diff.map(([i, v]) => [cx(i), my(v).toFixed(1)]), "#ffffff", 1);
s += poly(dea.map(([i, v]) => [cx(i), my(v).toFixed(1)]), "#dede00", 1);

const smallArrow = (x, y, dir, color) => `<path fill="${color}" d="M${x} ${y}l${-8} ${-8 * dir}h6v${-8 * dir}h4v${8 * dir}h6Z"/>`;
const bigArrow = (x, tip, dir, color) => `<path fill="none" stroke="${color}" stroke-width="3" d="M${x} ${tip}v${-52 * dir}M${x - 10} ${tip - 14 * dir}L${x} ${tip - 2 * dir}L${x + 10} ${tip - 14 * dir}M${x - 5} ${tip - 12 * dir}L${x} ${tip - 2 * dir}L${x + 5} ${tip - 12 * dir}"/>`;
pairs("408,1487 1631,1546 1776,1558 2159,1556").forEach(([x, y]) => { s += smallArrow(x, y, 1, "#00dc00"); });
pairs("768,1613 911,1618 996,1614 1200,1615 1752,1571 1931,1592 2328,1593 2424,1592").forEach(([x, y]) => { s += smallArrow(x, y, -1, RED); });
pairs("802,1606 981,1606 1101,1605 2386,1583").forEach(([x, y]) => { s += bigArrow(x, y, 1, "#00ff00"); });
pairs("1750,1580 1930,1600 2326,1601 2421,1600").forEach(([x, y]) => { s += bigArrow(x, y, -1, RED); });
[["4.00", 1465], ["2.00", 1525], ["0.00", 1585], ["-2.00", 1646]].forEach(([t, y]) => { s += text(168, y, t, "#808080", "axis bold"); });
document.getElementById("macd").innerHTML = s;

// ---- market index ----
const market = parseBars(`r506,514,545,545 c514,518,531,531 r491,500,506,506 c491,498,504,508 c503,503,522,522 r490,497,520,520
  c490,495,507,516 r509,513,519,527 c504,510,516,522 c516,518,531,531 c513,521,528,531 r507,509,530,533 r497,502,509,514
  c503,507,516,522 r506,510,516,522 c512,515,537,541 c528,540,555,558 r540,542,551,564 c542,542,561,561 r546,555,561,564
  c551,558,564,564 c549,558,567,567 r555,561,567,575 r542,547,566,572 c540,549,561,561 c549,555,570,573 c560,567,582,594
  r574,580,590,597 r572,578,584,588 c574,577,591,594 r578,584,592,601 r572,577,589,589 r567,571,578,578 c570,570,588,588
  c585,588,612,612 r604,611,617,621 c615,621,636,636 c629,633,648,657 r622,626,647,653 c630,630,648,648 r627,645,653,655
  r632,637,650,658 c636,639,654,657 c647,652,659,667 c648,657,675,675 r666,670,676,689 c672,672,693,697 r662,667,695,701
  r661,669,675,678 r640,644,654,663 r639,645,651,651 c648,648,654,657 r640,640,655,655 c639,642,651,654 r640,640,659,665
  r630,637,650,650 c633,636,645,650 c642,642,687,687 c678,687,705,708 r696,705,711,713 r682,685,700,700 c687,687,700,702
  c702,703,709,717 r660,661,710,710 c651,657,675,678 c669,684,693,696 c675,705,720,720 c696,702,708,720 c699,708,714,717
  r696,710,716,725 c697,702,720,720 c710,717,723,726 r710,715,722,728 c714,714,732,732 r710,721,734,734 c711,720,726,730
  r711,722,727,727 c720,720,741,744 r732,744,750,750 c741,741,756,759 r747,752,761,761 c744,747,753,755 c753,753,766,768
  r761,768,774,777 r749,758,776,776 r708,724,757,757 c726,726,756,756 r733,739,754,754 r732,743,749,752 r734,739,745,745
  c738,738,762,762 c758,765,770,784 r762,768,774,786 r756,763,773,773 c750,759,774,774 c766,771,786,786 r776,779,786,797
  r753,766,779,788 c765,765,771,779 r753,765,771,771 r711,711,758,767 c662,690,696,699 r633,633,697,700 r521,541,608,608
  r375,379,472,491 c168,168,228,332 c258,279,378,384 c330,366,390,417 c402,405,456,473 r405,412,445,471 c396,417,453,453
  r444,469,478,483 c441,456,483,483 r366,406,485,485 r360,388,395,410 r367,373,391,399 r348,373,380,391 c376,381,396,402
  r345,363,388,393 r355,355,364,383 c345,351,378,381 r367,379,386,395 r351,369,379,392 c363,372,393,399 r358,358,392,392
  r300,304,358,367 c276,300,312,323 r268,268,328,332 c237,243,282,286 r243,243,292,292 c216,234,258,273 r243,248,268,284
  c249,252,300,304 c294,306,345,345 c333,339,378,390 r341,346,373,396 r325,332,349,354 r324,333,339,347 c330,336,396,396
  c381,390,399,420 c387,402,411,414 r373,373,419,431 c369,372,396,399 r348,367,400,400 r339,343,370,370 c342,342,351,366
  c348,351,369,378 r357,361,373,373 r327,337,361,366 c333,339,348,360 c282,285,336,339 r321,329,340,340 r310,310,328,335
  c324,324,351,354 c348,351,375,380 c354,375,381,381 r360,369,375,381 r354,361,385,390 r345,359,365,365 c351,360,381,381
  r354,358,376,376 c354,354,369,378 r351,356,370,374 c339,354,360,366 r348,356,363,363 c354,357,399,399 c396,399,450,465
  c441,447,480,484 c465,480,486,495 r463,463,485,491 r459,471,477,506 r459,466,478,478 c462,468,498,498 r484,496,512,512
  r437,437,490,499 c437,441,456,459 c423,444,450,461 r427,436,455,455 r408,420,426,431 c411,411,417,432 c420,420,429,437
  c396,411,438,438 r412,419,443,443 c412,414,441,441 c423,423,438,444 r401,401,440,444 r358,374,398,405 r361,363,369,381
  c360,360,378,381 r352,352,380,380 c346,351,366,366 r343,343,364,364 c329,333,348,351`, 1640, 3);

s = frame(1660, 1915, 1690) + candles(market);
[["11000.00", 1741], ["10000.00", 1794], ["9000.00", 1847], ["8000.00", 1900]].forEach(([t, y]) => { s += text(168, y, t, "#808080", "axis bold"); });
[["2024/06/03", 436], ["2024/08/01", 940], ["2024/10/08", 1432], ["2024/12/02", 1900], ["2025/02/17", 2476]].forEach(([t, x]) => {
  s += text(x, 1931, t, "#808080", "mid");
});
document.getElementById("index").innerHTML = s;
```
